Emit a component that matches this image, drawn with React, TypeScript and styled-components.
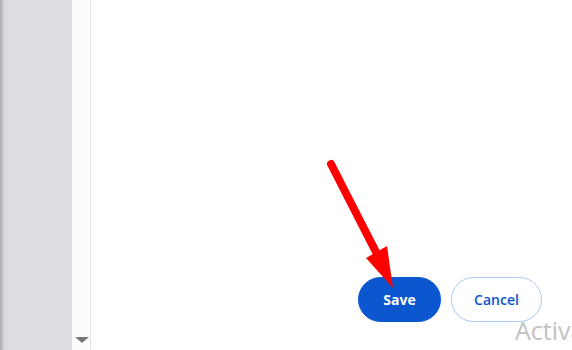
import React from "react";
import styled, { createGlobalStyle } from "styled-components";

const Global = createGlobalStyle`
  html, body { margin: 0; padding: 0; width: 572px; height: 350px; overflow: hidden; background: #fff; }
  #root { width: 572px; height: 350px; }
  * { box-sizing: border-box; }
`;

const Page = styled.div`
  position: relative;
  display: flex;
  width: 572px;
  height: 350px;
  font-family: "Open Sans", "Noto Sans", sans-serif;
`;

const Sidebar = styled.div`
  width: 72px;
  flex: none;
  background: linear-gradient(to right, #a8a9ad 0px, #bfc0c4 2px, #d3d4d8 4px, #dcdde1 6px, #dcdde1 100%);
`;

const ScrollTrack = styled.div`
  width: 19px;
  flex: none;
  background: #fcfcfc;
  border-right: 1px solid #e3e3e3;
  display: flex;
  flex-direction: column;
  justify-content: flex-end;
  align-items: center;
  padding: 0 0 7px 1px;
`;

const DownTriangle = styled.div`
  width: 0;
  height: 0;
  border-left: 7px solid transparent;
  border-right: 7px solid transparent;
  border-top: 6px solid #797979;
`;

const Main = styled.div`
  flex: 1;
  display: flex;
  flex-direction: column;
  justify-content: flex-end;
  align-items: flex-end;
  padding: 0 30px 28px 0;
`;

const ButtonRow = styled.div`
  display: flex;
  gap: 10px;
`;

const Button = styled.button<{ $primary?: boolean }>`
  height: 45px;
  width: ${(p) => (p.$primary ? "83px" : "91px")};
  border-radius: 23px;
  font-family: "Open Sans", "Noto Sans", sans-serif;
  font-size: 14px;
  font-weight: ${(p) => (p.$primary ? 700 : 600)};
  cursor: pointer;
  background: ${(p) => (p.$primary ? "#0b57d0" : "#ffffff")};
  color: ${(p) => (p.$primary ? "#ffffff" : "#0b57d0")};
  border: 1px solid ${(p) => (p.$primary ? "#0b57d0" : "#a8c7fa")};
  padding: 0;
`;

const Watermark = styled.div`
  position: absolute;
  left: 515px;
  top: 313px;
  font-family: "Open Sans", "Noto Sans", sans-serif;
  font-weight: 400;
  font-size: 25px;
  color: #c2c2c2;
  white-space: nowrap;
  pointer-events: none;
`;

const ArrowLayer = styled.svg`
  position: absolute;
  left: 0;
  top: 0;
  width: 572px;
  height: 350px;
  pointer-events: none;
`;

export default function App() {
  return (
    <>
      <Global />
      <Page>
        <Sidebar />
        <ScrollTrack>
          <DownTriangle />
        </ScrollTrack>
        <Main>
          <ButtonRow>
            <Button $primary>Save</Button>
            <Button>Cancel</Button>
          </ButtonRow>
        </Main>
        <Watermark>Activate Windows</Watermark>
        <ArrowLayer viewBox="0 0 572 350">
          <line x1="331" y1="164" x2="377" y2="254" stroke="#ff0000" strokeWidth="8" strokeLinecap="round" />
          <polygon points="393,288 366,258 387,246" fill="#ff0000" />
        </ArrowLayer>
      </Page>
    </>
  );
}
